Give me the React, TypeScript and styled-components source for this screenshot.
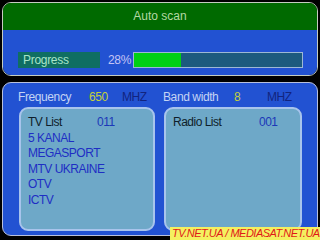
import React from 'react';
import styled, { createGlobalStyle } from 'styled-components';

const channels = ['5 KANAL', 'MEGASPORT', 'MTV UKRAINE', 'OTV', 'ICTV'];
const progress = 28;

const App: React.FC = () => {
  return (
    <>
      <GlobalStyle />
      <Screen>
        <ScanPanel>
          <Header>Auto scan</Header>
          <ScanBody>
            <ProgressLabel>Progress</ProgressLabel>
            <Percent>{progress}%</Percent>
            <Bar>
              <Fill style={{ width: `${progress}%` }} />
            </Bar>
          </ScanBody>
        </ScanPanel>
        <ResultPanel>
          <InfoRow>
            <InfoLabel>Frequency</InfoLabel>
            <InfoValue>650</InfoValue>
            <Unit>MHZ</Unit>
          </InfoRow>
          <InfoRow>
            <InfoLabel>Band width</InfoLabel>
            <InfoValue>8</InfoValue>
            <Unit>MHZ</Unit>
          </InfoRow>
          <ListBox>
            <ListHead $valueAt={69}>
              <span>TV List</span>
              <Count>011</Count>
            </ListHead>
            {channels.map((name) => (
              <Channel key={name}>{name}</Channel>
            ))}
          </ListBox>
          <ListBox>
            <ListHead $valueAt={86}>
              <span>Radio List</span>
              <Count>001</Count>
            </ListHead>
          </ListBox>
        </ResultPanel>
        <Watermark>TV.NET.UA / MEDIASAT.NET.UA</Watermark>
      </Screen>
    </>
  );
};

const GlobalStyle = createGlobalStyle`
  body {
    margin: 0;
    background: #000;
    font-family: 'Liberation Sans', Arial, sans-serif;
  }
`;

const Screen = styled.div`
  position: relative;
  width: 320px;
  height: 240px;
  background: #000;
  padding: 2px 2px 0;
  box-sizing: border-box;
  display: flex;
  flex-direction: column;
  gap: 6px;
  overflow: hidden;
`;

const ScanPanel = styled.div`
  height: 74px;
  border: 1px solid #c4ccc0;
  border-radius: 9px;
  overflow: hidden;
  display: flex;
  flex-direction: column;
  box-sizing: border-box;
`;

const Header = styled.div`
  height: 25px;
  background: #006a00;
  color: #b4d8a4;
  font-size: 12px;
  display: flex;
  align-items: center;
  justify-content: center;
  padding-bottom: 2px;
`;

const ScanBody = styled.div`
  flex: 1;
  background: #2252d2;
  display: flex;
  align-items: flex-start;
  padding: 22px 0 0 15px;
`;

const ProgressLabel = styled.div`
  width: 82px;
  height: 16px;
  background: #0f6e62;
  color: #a8e4c8;
  font-size: 12px;
  letter-spacing: -0.3px;
  line-height: 16px;
  padding-left: 5px;
  box-sizing: border-box;
`;

const Percent = styled.div`
  width: 25px;
  margin-left: 8px;
  color: #c4c4f4;
  font-size: 12px;
  line-height: 16px;
  letter-spacing: -0.3px;
`;

const Bar = styled.div`
  width: 170px;
  height: 16px;
  box-sizing: border-box;
  border: 1px solid #9cb8d4;
  background: #1c5a7e;
`;

const Fill = styled.div`
  height: 100%;
  background: #00d014;
`;

const ResultPanel = styled.div`
  height: 154px;
  box-sizing: border-box;
  border: 1px solid #b8c0dc;
  border-radius: 9px;
  background: #2252d2;
  display: grid;
  grid-template-columns: 136px 138px;
  grid-template-rows: 20px 1fr;
  column-gap: 9px;
  padding: 4px 15px 4px 16px;
`;

const InfoRow = styled.div`
  display: grid;
  grid-template-columns: 71px 33px auto;
  align-items: center;
  font-size: 12px;
  letter-spacing: -0.4px;
  margin-left: -1px;
`;

const InfoLabel = styled.span`
  color: #c4d4f4;
`;

const InfoValue = styled.span`
  color: #c4d03c;
`;

const Unit = styled.span`
  color: #12247e;
`;

const ListBox = styled.div`
  box-sizing: border-box;
  border: 2px solid #a8c4ec;
  border-radius: 9px;
  background: #6ea8c8;
  padding: 6px 0 0 7px;
  font-size: 12px;
  letter-spacing: -0.5px;
  line-height: 15.6px;
`;

const ListHead = styled.div<{ $valueAt: number }>`
  display: grid;
  grid-template-columns: ${(p) => p.$valueAt}px auto;
  color: #0e1e2a;
`;

const Count = styled.span`
  color: #1c38b8;
`;

const Channel = styled.div`
  color: #1e2ec4;
`;

const Watermark = styled.div`
  position: absolute;
  right: 0;
  bottom: 0;
  width: 150px;
  height: 13px;
  background: #f4f060;
  color: #e01818;
  font-size: 11px;
  font-style: italic;
  line-height: 13px;
  padding-left: 2px;
  box-sizing: border-box;
  white-space: nowrap;
  letter-spacing: -0.5px;
`;

export default App;
